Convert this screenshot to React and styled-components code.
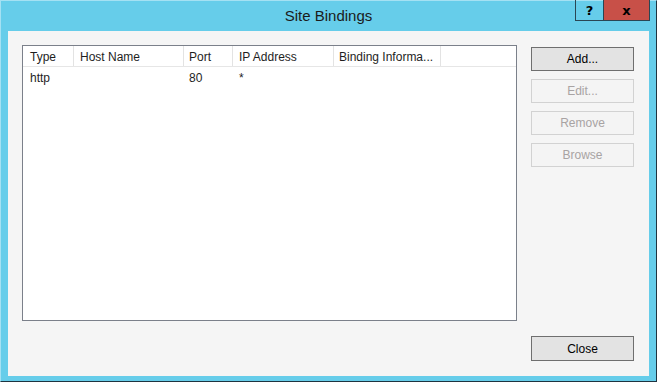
import React from 'react';
import styled, { createGlobalStyle } from 'styled-components';

const GlobalStyle = createGlobalStyle`
    html, body {
        margin: 0;
        padding: 0;
        background: #ffffff;
    }
    body {
        font-family: "Liberation Sans", Arial, sans-serif;
        font-size: 12px;
        color: #000000;
    }
`;

const Window = styled.div`
    box-sizing: border-box;
    width: 657px;
    height: 382px;
    display: flex;
    flex-direction: column;
    padding: 0 7px 5px 7px;
    background: #66cdea;
    border-top: 1px solid #a4e1f3;
    border-left: 1px solid #a4e1f3;
    border-right: 1px solid #1f3440;
    border-bottom: 1px solid #1f3440;
`;

const TitleBar = styled.div`
    height: 31px;
    display: grid;
    grid-template-columns: 1fr auto 1fr;
    align-items: start;
    margin: -1px -7px 0 -7px;
`;

const Title = styled.div`
    grid-column: 2;
    padding-top: 7px;
    font-size: 15px;
    color: #1b1b1b;
    white-space: nowrap;
`;

const Controls = styled.div`
    grid-column: 3;
    justify-self: end;
    display: flex;
    margin-right: 6px;
`;

const CaptionButton = styled.div`
    box-sizing: border-box;
    width: ${p => p.$width}px;
    height: 21px;
    display: flex;
    align-items: center;
    justify-content: center;
    background: ${p => p.$close ? '#c85048' : 'transparent'};
    border: 1px solid #2a4654;
    border-top: none;
    border-left: ${p => p.$close ? 'none' : '1px solid #2a4654'};
    font-family: "DejaVu Sans", sans-serif;
    font-weight: bold;
    font-size: 13px;
    color: #000000;
`;

const Client = styled.div`
    flex: 1;
    box-sizing: border-box;
    display: flex;
    flex-direction: column;
    padding: 14px 15px 15px 14px;
    background: #f5f5f5;
`;

const Main = styled.div`
    flex: 1;
    display: flex;
    gap: 14px;
`;

const ListView = styled.div`
    box-sizing: border-box;
    width: 495px;
    height: 276px;
    background: #ffffff;
    border: 1px solid #7b808a;
`;

const HeaderRow = styled.div`
    display: flex;
    height: 20px;
    border-bottom: 1px solid #e6e6e6;
`;

const HeaderCell = styled.div`
    box-sizing: border-box;
    width: ${p => p.$width}px;
    padding-left: ${p => p.$pad}px;
    padding-top: 2px;
    line-height: 18px;
    border-right: 1px solid #e3e3e3;
    white-space: nowrap;
    overflow: hidden;
    color: #1e1e1e;
`;

const Row = styled.div`
    display: flex;
    height: 20px;
`;

const Cell = styled.div`
    box-sizing: border-box;
    width: ${p => p.$width}px;
    padding-left: ${p => p.$pad}px;
    padding-top: 2px;
    line-height: 18px;
    white-space: nowrap;
    color: #1e1e1e;
`;

const ButtonColumn = styled.div`
    display: flex;
    flex-direction: column;
    gap: 8px;
    padding-top: 2px;
`;

const Button = styled.div`
    box-sizing: border-box;
    width: 103px;
    height: 24px;
    display: flex;
    align-items: center;
    justify-content: center;
    border: 1px solid ${p => p.$disabled ? '#d2d2d2' : '#6f6f6f'};
    background: ${p => p.$disabled ? '#f4f4f4' : '#e3e3e3'};
    color: ${p => p.$disabled ? '#a8a3a3' : '#000000'};
`;

const Footer = styled.div`
    display: flex;
    justify-content: flex-end;
`;

const CloseButton = styled(Button)`
    height: 25px;
`;

const columns = [
    { label: 'Type', width: 51, pad: 7 },
    { label: 'Host Name', width: 110, pad: 6 },
    { label: 'Port', width: 49, pad: 5 },
    { label: 'IP Address', width: 101, pad: 6 },
    { label: 'Binding Informa...', width: 107, pad: 5 },
];

const bindings = [
    ['http', '', '80', '*', ''],
];

export default function App() {
    return (
        <>
            <GlobalStyle />
            <Window>
                <TitleBar>
                    <Title>Site Bindings</Title>
                    <Controls>
                        <CaptionButton $width={29}>?</CaptionButton>
                        <CaptionButton $width={46} $close>x</CaptionButton>
                    </Controls>
                </TitleBar>
                <Client>
                    <Main>
                        <ListView>
                            <HeaderRow>
                                {columns.map(c => (
                                    <HeaderCell key={c.label} $width={c.width} $pad={c.pad}>
                                        {c.label}
                                    </HeaderCell>
                                ))}
                            </HeaderRow>
                            {bindings.map((b, i) => (
                                <Row key={i}>
                                    {b.map((v, j) => (
                                        <Cell key={j} $width={columns[j].width} $pad={columns[j].pad}>
                                            {v}
                                        </Cell>
                                    ))}
                                </Row>
                            ))}
                        </ListView>
                        <ButtonColumn>
                            <Button>Add...</Button>
                            <Button $disabled>Edit...</Button>
                            <Button $disabled>Remove</Button>
                            <Button $disabled>Browse</Button>
                        </ButtonColumn>
                    </Main>
                    <Footer>
                        <CloseButton>Close</CloseButton>
                    </Footer>
                </Client>
            </Window>
        </>
    );
}
